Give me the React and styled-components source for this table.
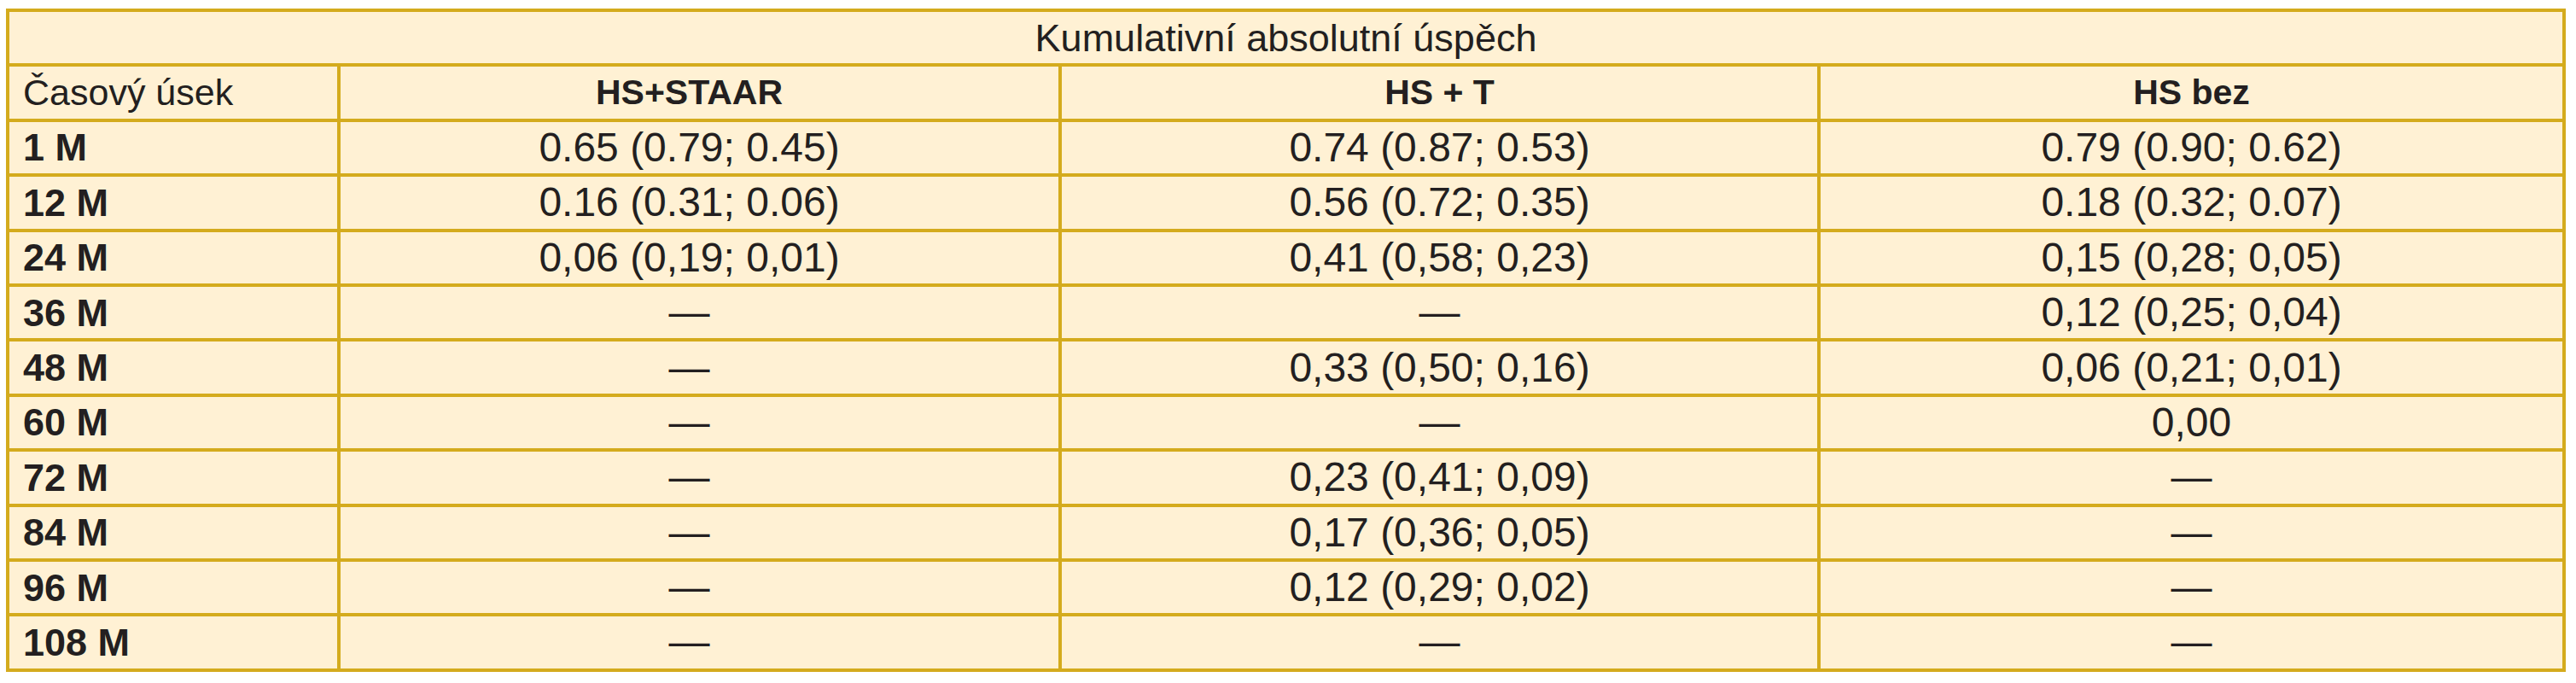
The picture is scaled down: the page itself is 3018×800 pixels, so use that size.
import React from "react";
import styled, { createGlobalStyle } from "styled-components";

const GlobalStyle = createGlobalStyle`
  body {
    margin: 0;
    background: #ffffff;
    font-family: "Liberation Sans", Arial, sans-serif;
  }
`;

const rows = [
  ["1 M", "0.65 (0.79; 0.45)", "0.74 (0.87; 0.53)", "0.79 (0.90; 0.62)"],
  ["12 M", "0.16 (0.31; 0.06)", "0.56 (0.72; 0.35)", "0.18 (0.32; 0.07)"],
  ["24 M", "0,06 (0,19; 0,01)", "0,41 (0,58; 0,23)", "0,15 (0,28; 0,05)"],
  ["36 M", "—", "—", "0,12 (0,25; 0,04)"],
  ["48 M", "—", "0,33 (0,50; 0,16)", "0,06 (0,21; 0,01)"],
  ["60 M", "—", "—", "0,00"],
  ["72 M", "—", "0,23 (0,41; 0,09)", "—"],
  ["84 M", "—", "0,17 (0,36; 0,05)", "—"],
  ["96 M", "—", "0,12 (0,29; 0,02)", "—"],
  ["108 M", "—", "—", "—"],
];

const GOLD = "#d4ab1d";
const CREAM = "#fff1d4";
const INK = "#231f20";

const Page = styled.div`
  padding: 10px 0 0 7px;
`;

const Table = styled.table`
  width: 2995px;
  table-layout: fixed;
  border-collapse: collapse;
  background: ${CREAM};
  border: 4px solid ${GOLD};
  color: ${INK};
`;

const Col = styled.col`
  width: ${(p) => p.$w}px;
`;

const Row = styled.tr`
  height: 64.4px;
`;

// $pad shifts the centred text of a column a little off centre
const Cell = styled.td`
  border: 4px solid ${GOLD};
  padding: 0 ${(p) => p.$pad || 0}px 0 ${(p) => (p.$left ? 16 : 0)}px;
  text-align: ${(p) => (p.$left ? "left" : "center")};
  vertical-align: middle;
  line-height: 1;
  white-space: nowrap;
  font-size: ${(p) => p.$size || 48}px;
  font-weight: ${(p) => (p.$bold ? 700 : 400)};
`;

const Title = styled.th`
  border: 4px solid ${GOLD};
  padding: 0;
  font-size: 45px;
  font-weight: 400;
  line-height: 1;
  text-align: center;
  vertical-align: middle;
`;

const Head = styled.th`
  border: 4px solid ${GOLD};
  padding: 0 ${(p) => p.$pad || 0}px 0 ${(p) => (p.$left ? 16 : 0)}px;
  font-size: ${(p) => (p.$left ? 43 : 41)}px;
  font-weight: ${(p) => (p.$left ? 400 : 700)};
  line-height: 1;
  text-align: ${(p) => (p.$left ? "left" : "center")};
  vertical-align: middle;
`;

export default function App() {
  return (
    <Page>
      <GlobalStyle />
      <Table>
        <colgroup>
          <Col $w={388} />
          <Col $w={845} />
          <Col $w={889} />
          <Col $w={873} />
        </colgroup>
        <thead>
          <Row>
            <Title colSpan={4}>Kumulativní absolutní úspěch</Title>
          </Row>
          <Row>
            <Head $left>Časový úsek</Head>
            <Head $pad={24}>HS+STAAR</Head>
            <Head>HS + T</Head>
            <Head>HS bez</Head>
          </Row>
        </thead>
        <tbody>
          {rows.map((r) => (
            <Row key={r[0]}>
              <Cell $left $bold $size={45}>
                {r[0]}
              </Cell>
              <Cell $pad={24}>{r[1]}</Cell>
              <Cell>{r[2]}</Cell>
              <Cell>{r[3]}</Cell>
            </Row>
          ))}
        </tbody>
      </Table>
    </Page>
  );
}
